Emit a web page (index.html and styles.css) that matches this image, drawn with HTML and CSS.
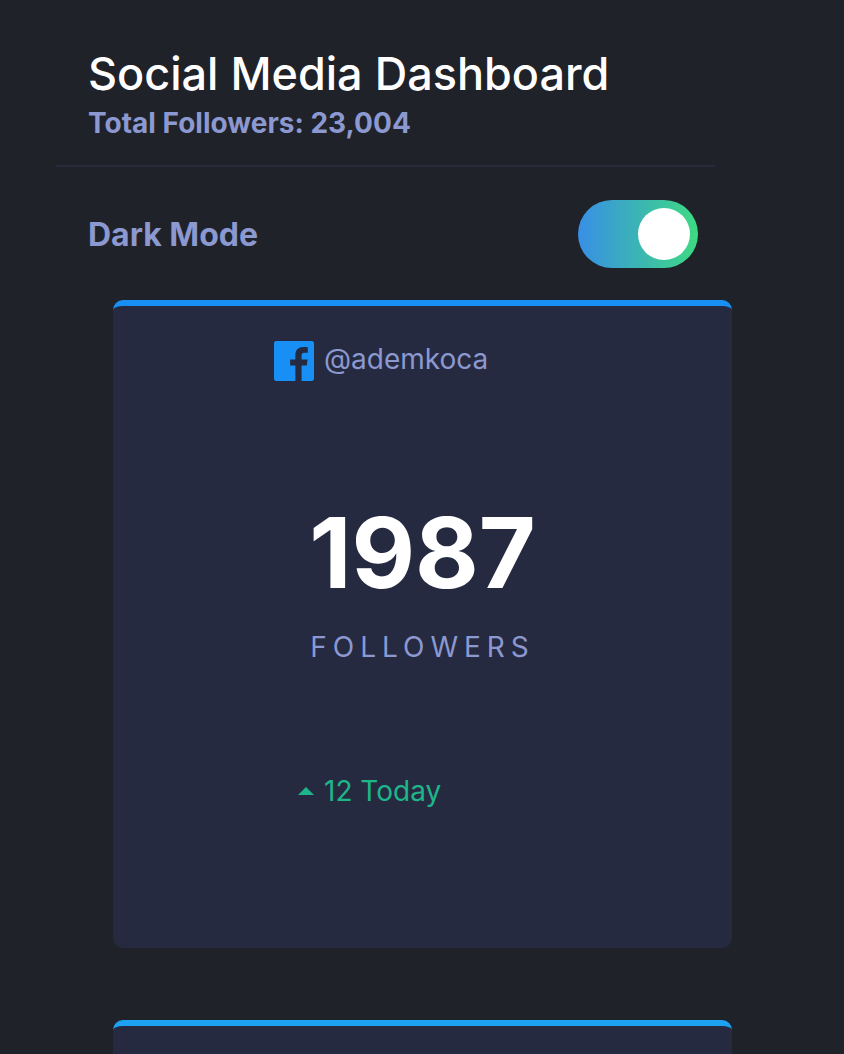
FILE: index.html
```html
<!DOCTYPE html>
<html lang="en">
<head>
<meta charset="utf-8">
<meta name="viewport" content="width=device-width, initial-scale=1">
<title>Social Media Dashboard</title>
<link rel="stylesheet" href="styles.css">
</head>
<body>
<header class="header">
  <div class="intro">
    <h1 class="title">Social Media Dashboard</h1>
    <p class="total">Total Followers: 23,004</p>
  </div>
  <div class="mode">
    <label class="mode-label" for="dark-mode">Dark Mode</label>
    <input class="toggle" type="checkbox" role="switch" id="dark-mode" checked>
  </div>
</header>
<main class="cards">
  <article class="card facebook">
    <div class="account">
      <svg class="logo" viewBox="0 0 20 20" aria-hidden="true"><path fill="#178FF5" d="M18.896 0H1.104C.494 0 0 .494 0 1.104v17.793C0 19.506.494 20 1.104 20h9.58v-7.745H8.076V9.237h2.606V7.01c0-2.583 1.578-3.99 3.883-3.99 1.104 0 2.052.082 2.329.119v2.7h-1.598c-1.254 0-1.496.597-1.496 1.47v1.928h2.989l-.39 3.018h-2.6V20h5.098c.608 0 1.102-.494 1.102-1.104V1.104C20 .494 19.506 0 18.896 0z"/></svg>
      <span>@ademkoca</span>
    </div>
    <p class="count">1987</p>
    <p class="unit">FOLLOWERS</p>
    <p class="change">
      <svg class="arrow" viewBox="0 0 16 8" aria-hidden="true"><path fill="#1EB589" d="M0 8 8 0l8 8z"/></svg>
      <span>12 Today</span>
    </p>
  </article>
  <article class="card twitter"></article>
</main>
</body>
</html>
```
FILE: styles.css
```css
* { box-sizing: border-box; }
body {
  margin: 0;
  background: #1f2229;
  color: #8c98d0;
  font-family: Inter, "Liberation Sans", sans-serif;
  font-size: 28px;
  overflow-x: hidden;
}
h1, p { margin: 0; }
.header { padding: 46px 129px 0 56px; }
.intro {
  padding: 0 0 21px 32px;
  border-bottom: 2px solid #282a3c;
}
.title {
  color: #fff;
  font-size: 45px;
  font-weight: 500;
  line-height: 56px;
  white-space: nowrap;
}
.total { font-weight: 700; line-height: 42px; }
.mode {
  display: flex;
  align-items: center;
  justify-content: space-between;
  padding: 33px 17px 32px 32px;
}
.mode-label { font-size: 32px; font-weight: 700; }
.toggle {
  appearance: none;
  display: flex;
  align-items: center;
  justify-content: flex-end;
  width: 120px;
  height: 68px;
  margin: 0;
  padding: 8px;
  border-radius: 34px;
  background: linear-gradient(90deg, #388fe6, #3eda82);
  cursor: pointer;
}
.toggle::before {
  content: "";
  width: 52px;
  height: 52px;
  border-radius: 50%;
  background: #fff;
}
.toggle:not(:checked) { justify-content: flex-start; }
.cards {
  display: flex;
  flex-direction: column;
  gap: 72px;
  padding: 0 112px 0 113px;
}
.card {
  min-height: 648px;
  border-top: 6px solid;
  border-radius: 10px;
  background: #252a41;
}
.facebook { border-color: #178ff5; }
.twitter { border-color: #1da1f2; }
.account {
  display: flex;
  align-items: flex-start;
  gap: 10px;
  padding: 35px 0 0 161px;
  line-height: 36px;
}
.logo { width: 40px; height: 40px; }
.count {
  padding-top: 112px;
  color: #fff;
  font-size: 98px;
  font-weight: 700;
  line-height: 120px;
  text-align: center;
}
.unit {
  padding-top: 14px;
  letter-spacing: 6px;
  line-height: 40px;
  text-align: center;
}
.change {
  display: flex;
  align-items: center;
  gap: 10px;
  padding: 104px 0 0 185px;
  color: #1eb589;
  line-height: 40px;
}
.arrow { width: 16px; height: 8px; }
```
